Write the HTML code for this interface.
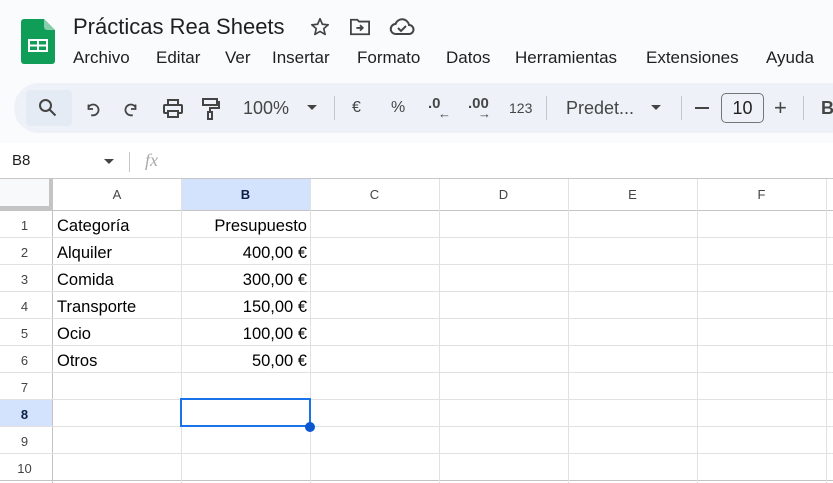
<!DOCTYPE html>
<html><head><meta charset="utf-8"><style>
*{margin:0;padding:0;box-sizing:border-box}
body{width:833px;height:483px;overflow:hidden;background:#f9fbfd;font-family:"Liberation Sans",Arial,sans-serif;color:#1f1f1f;position:relative}
.a{position:absolute}
.t{font-size:22px;white-space:nowrap}
.m{font-size:17px;white-space:nowrap;top:48px;color:#1f1f1f}
.tb{left:14px;top:83px;width:840px;height:50px;background:#eef2f8;border-radius:25px}
.ti{font-size:17px;color:#444746;white-space:nowrap}
.sep{width:1px;height:24px;background:#c7c7c7;top:96px}
.grid{left:0;top:179px;width:833px;height:304px;background:#fff}
.hl{position:absolute;height:1px;background:#e1e1e1;left:0;width:833px}
.vl{position:absolute;width:1px;background:#e1e1e1;top:0;height:304px}
.ch{position:absolute;top:1px;height:30px;line-height:30px;text-align:center;font-size:13px;color:#444}
.rh{position:absolute;left:0;width:49px;text-align:center;font-size:13px;color:#444;height:27px;line-height:29px}
.c{position:absolute;font-size:16.5px;height:27px;line-height:30px;color:#000;white-space:nowrap}
</style></head><body>
<svg class="a" style="left:21px;top:19px" width="34" height="45" viewBox="0 0 34 45">
<path d="M3 0H23L34 11V42a3 3 0 0 1-3 3H3a3 3 0 0 1-3-3V3a3 3 0 0 1 3-3z" fill="#0f9d58"/>
<path d="M23 0L34 11H26a3 3 0 0 1-3-3z" fill="#87ceac"/>
<rect x="7" y="20" width="20" height="13" fill="#fff"/>
<rect x="9" y="22" width="7" height="3.5" fill="#0f9d58"/><rect x="18" y="22" width="7" height="3.5" fill="#0f9d58"/>
<rect x="9" y="27.5" width="7" height="3.5" fill="#0f9d58"/><rect x="18" y="27.5" width="7" height="3.5" fill="#0f9d58"/>
</svg>
<div class="a t" style="left:73px;top:14px">Prácticas Rea Sheets</div>
<svg class="a" style="left:309px;top:16px" width="22" height="22" viewBox="0 0 24 24"><path d="M12 3l2.6 6 6.4.6-4.9 4.2 1.5 6.3L12 16.8 6.4 20.1l1.5-6.3L3 9.6l6.4-.6z" fill="none" stroke="#444" stroke-width="1.8" stroke-linejoin="round"/></svg>
<svg class="a" style="left:349px;top:17px" width="22" height="20" viewBox="0 0 24 22"><path d="M2 3h7l2 2h11v14H2z" fill="none" stroke="#444" stroke-width="2"/><path d="M8 12h7M12 9l3 3-3 3" stroke="#444" stroke-width="2" fill="none"/></svg>
<svg class="a" style="left:389px;top:17px" width="26" height="20" viewBox="0 0 26 20"><path d="M7 17a5 5 0 0 1-.5-10A7 7 0 0 1 20 8a4.5 4.5 0 0 1 0 9z" fill="none" stroke="#444" stroke-width="2"/><path d="M9 11l3 3 5-5" fill="none" stroke="#444" stroke-width="2"/></svg>
<div class="a m" style="left:73px">Archivo</div>
<div class="a m" style="left:156px">Editar</div>
<div class="a m" style="left:225px">Ver</div>
<div class="a m" style="left:272px">Insertar</div>
<div class="a m" style="left:357px">Formato</div>
<div class="a m" style="left:446px">Datos</div>
<div class="a m" style="left:515px">Herramientas</div>
<div class="a m" style="left:646px">Extensiones</div>
<div class="a m" style="left:766px">Ayuda</div>
<div class="a tb"></div>
<div class="a" style="left:26px;top:90px;width:46px;height:36px;background:#e5ebf4;border-radius:4px"></div>
<svg class="a" style="left:38px;top:98px" width="20" height="20" viewBox="0 0 20 20"><circle cx="7.5" cy="7.5" r="5.5" fill="none" stroke="#444" stroke-width="2"/><path d="M11.5 11.5l6 6" stroke="#444" stroke-width="2"/></svg>
<svg class="a" style="left:84px;top:100px" width="18" height="18" viewBox="0 0 20 20"><path d="M5 5v5h5" fill="none" stroke="#444" stroke-width="2"/><path d="M5 9a6 6 0 1 1 5 9H8" fill="none" stroke="#444" stroke-width="2" transform="translate(0,-1)"/></svg>
<svg class="a" style="left:122px;top:100px" width="18" height="18" viewBox="0 0 20 20"><path d="M15 5v5h-5" fill="none" stroke="#444" stroke-width="2"/><path d="M15 9a6 6 0 1 0-5 9h2" fill="none" stroke="#444" stroke-width="2" transform="translate(0,-1)"/></svg>
<svg class="a" style="left:162px;top:98px" width="22" height="22" viewBox="0 0 22 22"><rect x="6" y="2" width="10" height="5" fill="none" stroke="#444" stroke-width="2"/><rect x="2" y="7" width="18" height="8" rx="1" fill="none" stroke="#444" stroke-width="2"/><rect x="6" y="13" width="10" height="6" fill="#eef2f8" stroke="#444" stroke-width="2"/></svg>
<svg class="a" style="left:201px;top:97px" width="20" height="24" viewBox="0 0 20 24"><rect x="2" y="2" width="14" height="6" fill="none" stroke="#444" stroke-width="2"/><path d="M16 5h2v6H9v4" fill="none" stroke="#444" stroke-width="2"/><rect x="7" y="15" width="4" height="7" fill="none" stroke="#444" stroke-width="2"/></svg>
<div class="a ti" style="left:243px;top:98px;font-size:18px">100%</div>
<svg class="a" style="left:306px;top:104px" width="12" height="8"><path d="M1 1h10L6 6z" fill="#444"/></svg>
<div class="a sep" style="left:334px"></div>
<div class="a ti" style="left:352px;top:99px;font-size:16px">€</div>
<div class="a ti" style="left:391px;top:99px;font-size:16px">%</div>
<div class="a ti" style="left:428px;top:95px;font-size:15px;font-weight:bold">.0</div>
<div class="a ti" style="left:438px;top:106px;font-size:13px">←</div>
<div class="a ti" style="left:468px;top:95px;font-size:15px;font-weight:bold">.00</div>
<div class="a ti" style="left:478px;top:106px;font-size:13px">→</div>
<div class="a ti" style="left:509px;top:100px;font-size:14px">123</div>
<div class="a sep" style="left:546px"></div>
<div class="a ti" style="left:566px;top:98px;font-size:18px">Predet...</div>
<svg class="a" style="left:650px;top:104px" width="12" height="8"><path d="M1 1h10L6 6z" fill="#444"/></svg>
<div class="a sep" style="left:681px"></div>
<div class="a" style="left:695px;top:107px;width:14px;height:2px;background:#444"></div>
<div class="a" style="left:721px;top:93px;width:43px;height:30px;border:1px solid #747775;border-radius:5px;text-align:center;line-height:28px;font-size:18px;color:#1f1f1f">10</div>
<div class="a ti" style="left:774px;top:95px;font-size:22px">+</div>
<div class="a sep" style="left:803px"></div>
<div class="a ti" style="left:821px;top:98px;font-weight:bold;font-size:18px">B</div>
<div class="a" style="left:0;top:143px;width:833px;height:36px;background:#fff"></div>
<div class="a" style="left:12px;top:152px;font-size:15px">B8</div>
<svg class="a" style="left:103px;top:158px" width="12" height="8"><path d="M1 1h10L6 6z" fill="#444"/></svg>
<div class="a" style="left:129px;top:152px;width:1px;height:20px;background:#c7c7c7"></div>
<div class="a" style="left:145px;top:150px;font-size:18px;font-style:italic;font-family:'Liberation Serif',serif;color:#aaa">fx</div>
<div class="a" style="left:0;top:178px;width:833px;height:1px;background:#c7c7c7"></div>
<div class="a grid">
<div style="position:absolute;left:0;top:0;width:49px;height:27px;background:#f8f9fa"></div>
<div style="position:absolute;left:49px;top:0;width:4px;height:31px;background:#c4c4c4"></div>
<div style="position:absolute;left:0;top:27px;width:53px;height:4px;background:#c4c4c4"></div>
<div style="position:absolute;left:181px;top:0;width:129px;height:31px;background:#d3e3fd"></div>
<div style="position:absolute;left:0;top:220px;width:52px;height:27px;background:#d3e3fd"></div>
<div style="position:absolute;left:52px;top:0;width:1px;height:304px;background:#c4c4c4"></div>
<div class="hl" style="top:31px;background:#c4c4c4"></div>
<div class="hl" style="top:58px"></div><div class="hl" style="top:85px"></div><div class="hl" style="top:112px"></div><div class="hl" style="top:139px"></div><div class="hl" style="top:166px"></div><div class="hl" style="top:193px"></div><div class="hl" style="top:220px"></div><div class="hl" style="top:247px"></div><div class="hl" style="top:274px"></div><div class="hl" style="top:301px;background:#c4c4c4"></div>
<div class="vl" style="left:181px"></div><div class="vl" style="left:310px"></div><div class="vl" style="left:439px"></div><div class="vl" style="left:568px"></div><div class="vl" style="left:697px"></div><div class="vl" style="left:826px"></div>
<div class="ch" style="left:53px;width:128px">A</div>
<div class="ch" style="left:181px;width:129px;font-weight:bold;color:#0b1f44">B</div>
<div class="ch" style="left:310px;width:129px">C</div>
<div class="ch" style="left:439px;width:129px">D</div>
<div class="ch" style="left:568px;width:129px">E</div>
<div class="ch" style="left:697px;width:129px">F</div>
<div class="rh" style="top:32px">1</div><div class="rh" style="top:59px">2</div><div class="rh" style="top:86px">3</div><div class="rh" style="top:113px">4</div><div class="rh" style="top:140px">5</div><div class="rh" style="top:167px">6</div><div class="rh" style="top:194px">7</div><div class="rh" style="top:221px;font-weight:bold;color:#0b1f44">8</div><div class="rh" style="top:248px">9</div><div class="rh" style="top:275px">10</div>
<div class="c" style="left:57px;top:32px">Categoría</div>
<div class="c" style="left:57px;top:59px">Alquiler</div>
<div class="c" style="left:57px;top:86px">Comida</div>
<div class="c" style="left:57px;top:113px">Transporte</div>
<div class="c" style="left:57px;top:140px">Ocio</div>
<div class="c" style="left:57px;top:167px">Otros</div>
<div class="c" style="right:526px;top:32px">Presupuesto</div>
<div class="c" style="right:526px;top:59px">400,00 €</div>
<div class="c" style="right:526px;top:86px">300,00 €</div>
<div class="c" style="right:526px;top:113px">150,00 €</div>
<div class="c" style="right:526px;top:140px">100,00 €</div>
<div class="c" style="right:526px;top:167px">50,00 €</div>
<div style="position:absolute;left:180px;top:219px;width:131px;height:29px;border:2px solid #1a73e8"></div>
<div style="position:absolute;left:305px;top:243px;width:10px;height:10px;border-radius:50%;background:#0b57d0"></div>
</div>
</body></html>
